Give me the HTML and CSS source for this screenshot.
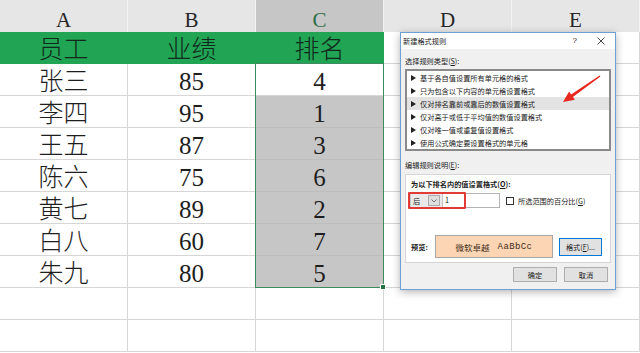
FILE: index.html
```html
<!DOCTYPE html>
<html lang="zh">

<head>
	<meta charset="UTF-8">
	<meta name="viewport" content="width=device-width, initial-scale=1.0">
	<title>新建格式规则</title>
	<link rel="stylesheet" href="styles.css">
</head>

<body>
	<div class="sheet">
		<div class="col-head">A</div>
		<div class="col-head">B</div>
		<div class="col-head col-head-sel">C</div>
		<div class="col-head">D</div>
		<div class="col-head">E</div>

		<div class="cell cell-title">员工</div>
		<div class="cell cell-title">业绩</div>
		<div class="cell cell-title">排名</div>
		<div class="cell"></div>
		<div class="cell"></div>

		<div class="cell">张三</div>
		<div class="cell">85</div>
		<div class="cell">4</div>
		<div class="cell"></div>
		<div class="cell"></div>

		<div class="cell">李四</div>
		<div class="cell">95</div>
		<div class="cell cell-sel">1</div>
		<div class="cell"></div>
		<div class="cell"></div>

		<div class="cell">王五</div>
		<div class="cell">87</div>
		<div class="cell cell-sel">3</div>
		<div class="cell"></div>
		<div class="cell"></div>

		<div class="cell">陈六</div>
		<div class="cell">75</div>
		<div class="cell cell-sel">6</div>
		<div class="cell"></div>
		<div class="cell"></div>

		<div class="cell">黄七</div>
		<div class="cell">89</div>
		<div class="cell cell-sel">2</div>
		<div class="cell"></div>
		<div class="cell"></div>

		<div class="cell">白八</div>
		<div class="cell">60</div>
		<div class="cell cell-sel">7</div>
		<div class="cell"></div>
		<div class="cell"></div>

		<div class="cell">朱九</div>
		<div class="cell">80</div>
		<div class="cell cell-sel">5</div>
		<div class="cell"></div>
		<div class="cell"></div>

		<div class="cell"></div>
		<div class="cell"></div>
		<div class="cell"></div>
		<div class="cell"></div>
		<div class="cell"></div>

		<div class="cell"></div>
		<div class="cell"></div>
		<div class="cell"></div>
		<div class="cell"></div>
		<div class="cell"></div>

		<div class="selection"><span class="fill-handle"></span></div>
	</div>

	<div class="dialog">
		<div class="dialog-title">
			<span>新建格式规则</span>
			<span class="title-help">?</span>
			<svg class="title-close" width="8" height="8" viewBox="0 0 8 8">
				<path d="M0.5 0.5 L7.5 7.5 M7.5 0.5 L0.5 7.5" stroke="#333" stroke-width="0.9" fill="none" />
			</svg>
		</div>

		<div class="dialog-body">
			<div class="label">选择规则类型(<u>S</u>):</div>
			<ul class="rule-list">
				<li class="rule-item">基于各自值设置所有单元格的格式</li>
				<li class="rule-item">只为包含以下内容的单元格设置格式</li>
				<li class="rule-item rule-item-active">仅对排名靠前或靠后的数值设置格式</li>
				<li class="rule-item">仅对高于或低于平均值的数值设置格式</li>
				<li class="rule-item">仅对唯一值或重复值设置格式</li>
				<li class="rule-item">使用公式确定要设置格式的单元格</li>
			</ul>

			<div class="label label-edit">编辑规则说明(<u>E</u>):</div>
			<div class="edit-box">
				<div class="edit-heading">为以下排名内的值设置格式(<u>O</u>):</div>
				<div class="ctrl-row">
					<div class="dropdown">
						<span>后</span>
						<span class="dropdown-btn">
							<svg width="6" height="4" viewBox="0 0 6 4">
								<path d="M0.5 0.5 L3 3 L5.5 0.5" stroke="#555" stroke-width="0.8" fill="none" />
							</svg>
						</span>
					</div>
					<div class="text-field">1</div>
					<span class="checkbox"></span>
					<span class="check-label">所选范围的百分比(<u>G</u>)</span>
					<span class="mark"></span>
				</div>
				<div class="preview-row">
					<span class="preview-label">预览:</span>
					<div class="preview">
						<span class="preview-cn">微软卓越</span>
						<span class="preview-en">AaBbCc</span>
					</div>
					<div class="btn btn-format">格式(<u>F</u>)...</div>
				</div>
			</div>

			<div class="button-row">
				<div class="btn">确定</div>
				<div class="btn">取消</div>
			</div>
		</div>
	</div>

	<svg class="arrow" width="44" height="34" viewBox="0 0 44 34">
		<polygon points="39.6,3.4 40.4,4.6 12.9,25 14.9,27.8 3,30 9.1,19.6 11.1,22.4" fill="#e8271f" />
	</svg>
</body>

</html>
```

FILE: styles.css
```css
html,
body {
	margin: 0;
	padding: 0;
}

body {
	position: relative;
	width: 640px;
	height: 353px;
	overflow: hidden;
	background-color: white;
	font-family: "Liberation Serif", "Noto Sans CJK SC", serif;
}

/* spreadsheet */

.sheet {
	position: relative;
	display: grid;
	grid-template-columns: repeat(5, 128px);
	grid-template-rows: repeat(11, 32px);
}

.col-head {
	box-sizing: border-box;
	padding-top: 8px;
	background-color: #e6e6e6;
	border-right: 1px solid #f2f2f2;
	color: #262626;
	font-size: 21px;
	line-height: 24px;
	text-align: center;
}

.col-head-sel {
	background-color: #c6c6c6;
	color: #2f6e48;
}

.cell {
	box-sizing: border-box;
	padding-top: 6px;
	border-right: 1px solid #d6d6d6;
	border-bottom: 1px solid #d6d6d6;
	color: #1e1e1e;
	font-size: 25px;
	font-weight: 300;
	line-height: 24px;
	text-align: center;
}

.cell-title {
	background-color: #21a453;
	border-color: #21a453;
	color: #10291a;
}

.cell-sel {
	background-color: #c6c6c6;
	border-color: #bdbdbd;
}

.selection {
	position: absolute;
	grid-column: 3 / 4;
	grid-row: 3 / 10;
	top: -1px;
	left: -1px;
	right: 0;
	bottom: 0;
	border: 1px solid #3f8a5e;
}

.fill-handle {
	position: absolute;
	right: -3px;
	bottom: -3px;
	width: 4px;
	height: 4px;
	background-color: #217346;
	border: 1px solid white;
}

/* dialog */

.dialog {
	position: absolute;
	left: 400px;
	top: 32px;
	width: 216px;
	height: 258px;
	box-sizing: border-box;
	display: flex;
	flex-direction: column;
	border: 1px solid #6c9fd6;
	background-color: #f0f0f0;
	box-shadow: 0 2px 8px rgba(0, 0, 0, 0.3);
	color: #1a1a1a;
	font-family: "Noto Sans CJK SC", sans-serif;
	font-size: 7.2px;
	line-height: 10px;
}

.dialog-title {
	height: 16px;
	display: flex;
	align-items: center;
	padding-left: 2px;
	background-color: white;
}

.title-help {
	margin-left: auto;
	font-family: "Liberation Sans", sans-serif;
	font-size: 8px;
}

.title-close {
	margin-left: 20px;
	margin-right: 10px;
}

.dialog-body {
	flex: 1;
	display: flex;
	flex-direction: column;
	padding: 0 4px;
}

.label {
	margin-top: 7px;
}

.label-edit {
	margin-top: 9px;
}

.rule-list {
	box-sizing: border-box;
	height: 82px;
	margin: 3px 0 0 0;
	padding: 0;
	list-style: none;
	border: 2px solid #8a8a8a;
	background-color: white;
}

.rule-item {
	height: 13px;
	display: flex;
	align-items: center;
	gap: 4px;
	padding-left: 4px;
}

.rule-item::before {
	content: "";
	border-left: 5px solid #222;
	border-top: 3px solid transparent;
	border-bottom: 3px solid transparent;
}

.rule-item-active {
	background-color: #e3e3e3;
}

.edit-box {
	box-sizing: border-box;
	height: 89px;
	margin-top: 4px;
	padding: 4px 5px 0;
	display: flex;
	flex-direction: column;
	border: 1px solid #d5d5d5;
	background-color: white;
}

.edit-heading {
	font-weight: bold;
}

.ctrl-row {
	position: relative;
	height: 15px;
	margin-top: 4px;
	display: flex;
	align-items: center;
}

.dropdown {
	box-sizing: border-box;
	width: 33px;
	height: 15px;
	margin-left: -1px;
	padding: 0 2px;
	display: flex;
	align-items: center;
	justify-content: space-between;
	border: 1px solid #c4c4c4;
	background-color: #eaeaea;
}

.dropdown-btn {
	box-sizing: border-box;
	width: 12px;
	height: 11px;
	display: flex;
	align-items: center;
	justify-content: center;
	border: 1px solid #ababab;
	background-color: #dedede;
}

.text-field {
	box-sizing: border-box;
	width: 57px;
	height: 15px;
	padding-left: 2px;
	border: 1px solid #b3b3b3;
	border-left: none;
	line-height: 13px;
}

.checkbox {
	box-sizing: border-box;
	width: 8px;
	height: 8px;
	margin-left: 6px;
	border: 1px solid #333;
	background-color: white;
}

.check-label {
	margin-left: 4px;
}

.mark {
	position: absolute;
	left: -3px;
	top: -1px;
	width: 58px;
	height: 17px;
	box-sizing: border-box;
	border: 2px solid #e23a36;
	border-radius: 1px;
}

.preview-row {
	height: 23px;
	margin-top: 27px;
	display: flex;
	align-items: center;
}

.preview-label {
	width: 24px;
	font-weight: bold;
}

.preview {
	box-sizing: border-box;
	width: 118px;
	height: 23px;
	display: flex;
	align-items: center;
	justify-content: center;
	gap: 8px;
	border: 1px solid #a6a6a6;
	background-color: #fcd5b4;
	color: #3e2d1a;
}

.preview-cn {
	font-size: 8.5px;
}

.preview-en {
	font-family: "Liberation Mono", monospace;
	font-size: 9px;
	letter-spacing: 0.4px;
}

.btn {
	box-sizing: border-box;
	width: 44px;
	height: 15px;
	display: flex;
	align-items: center;
	justify-content: center;
	border: 1px solid #adadad;
	background-color: #e1e1e1;
}

.btn-format {
	width: 43px;
	height: 18px;
	margin-left: 6px;
	border-color: #0078d7;
}

.button-row {
	margin-top: 4px;
	padding-right: 3px;
	display: flex;
	justify-content: flex-end;
	gap: 7px;
}

/* annotation arrow */

.arrow {
	position: absolute;
	left: 560px;
	top: 72px;
}
```
